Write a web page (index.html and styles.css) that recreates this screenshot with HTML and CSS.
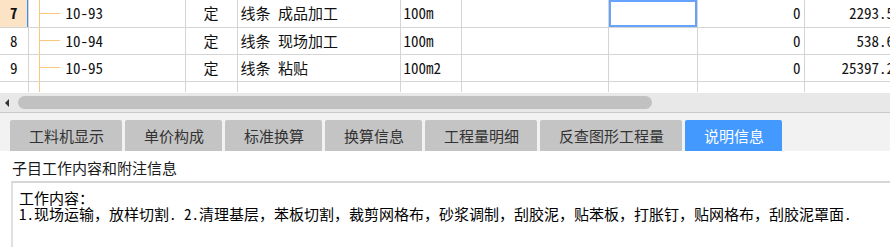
FILE: index.html
```html
<!DOCTYPE html>
<html lang="zh-CN">
<head>
<meta charset="utf-8">
<title>定额说明信息</title>
<link rel="stylesheet" href="styles.css">
</head>
<body>
<div class="grid">
  <table class="sheet">
    <colgroup>
      <col class="w-num"><col class="w-code"><col class="w-type"><col class="w-name"><col class="w-unit"><col class="w-blank"><col class="w-cur"><col class="w-qty"><col class="w-sum">
    </colgroup>
    <tr class="selected">
      <td class="num">7</td><td class="tree">10-93</td><td class="c">定</td><td>线条 成品加工</td><td>100m</td><td></td><td class="cur"></td><td class="r">0</td><td class="r">2293.54</td>
    </tr>
    <tr>
      <td class="num">8</td><td class="tree">10-94</td><td class="c">定</td><td>线条 现场加工</td><td>100m</td><td></td><td></td><td class="r">0</td><td class="r">538.61</td>
    </tr>
    <tr>
      <td class="num">9</td><td class="tree">10-95</td><td class="c">定</td><td>线条 粘贴</td><td>100m2</td><td></td><td></td><td class="r">0</td><td class="r">25397.22</td>
    </tr>
    <tr class="filler">
      <td class="num"></td><td class="tree stem"></td><td></td><td></td><td></td><td></td><td></td><td></td><td></td>
    </tr>
  </table>
</div>
<div class="hscroll">
  <span class="arrow"></span>
  <div class="thumb"></div>
</div>
<div class="tabs">
  <div class="tab">工料机显示</div>
  <div class="tab">单价构成</div>
  <div class="tab">标准换算</div>
  <div class="tab">换算信息</div>
  <div class="tab">工程量明细</div>
  <div class="tab">反查图形工程量</div>
  <div class="tab active">说明信息</div>
</div>
<div class="panel">
  <div class="caption">子目工作内容和附注信息</div>
  <div class="box">工作内容：<br>1.现场运输，放样切割. 2.清理基层，苯板切割，裁剪网格布，砂浆调制，刮胶泥，贴苯板，打胀钉，贴网格布，刮胶泥罩面.</div>
</div>
</body>
</html>
```
FILE: styles.css
```css
html, body {
  margin: 0;
  padding: 0;
  width: 890px;
  height: 247px;
  overflow: hidden;
  background: #fff;
}
body {
  font-family: "Noto Sans Mono CJK SC", "Noto Sans CJK SC", monospace;
  font-size: 15px;
  color: #111;
}

/* grid */
.grid {
  height: 92px;
  overflow: hidden;
}
.sheet {
  border-collapse: collapse;
  table-layout: fixed;
  width: 905px;
}
.w-num { width: 28px; }
.w-code { width: 157px; }
.w-type { width: 52px; }
.w-name { width: 163px; }
.w-unit { width: 61px; }
.w-blank { width: 147px; }
.w-cur { width: 89px; }
.w-qty { width: 107px; }
.w-sum { width: 101px; }

.sheet td {
  height: 27px;
  padding: 0 3px;
  border-right: 1px solid #d4d4d4;
  border-bottom: 1px solid #d4d4d4;
  white-space: nowrap;
  overflow: hidden;
  vertical-align: middle;
  line-height: 16px;
  box-sizing: border-box;
}
.sheet td.num {
  text-align: center;
  padding: 0;
}
.selected td.num {
  background: #fde3c6;
  font-weight: bold;
  box-shadow: inset -1px 0 0 #3d8ef5;
}
.sheet td.tree {
  padding-left: 37px;
  background:
    linear-gradient(#fbc67e, #fbc67e) 10px 0 / 1px 100% no-repeat,
    linear-gradient(#fbc67e, #fbc67e) 10px 50% / 21px 1px no-repeat;
}
.sheet td.stem {
  background: linear-gradient(#fbc67e, #fbc67e) 10px 0 / 1px 100% no-repeat;
}
.sheet td.c { text-align: center; }
.sheet td.r { text-align: right; }
.sheet td.cur {
  box-shadow: inset 0 0 0 2px #66a3ff;
}
.filler td {
  border-bottom: none;
}

/* horizontal scrollbar */
.hscroll {
  height: 19px;
  margin-top: 1px;
  background: #e8e8e8;
  border-bottom: 1px solid #c9c9c9;
  display: flex;
  align-items: center;
}
.arrow {
  width: 0;
  height: 0;
  margin-left: 5px;
  border-top: 4px solid transparent;
  border-bottom: 4px solid transparent;
  border-right: 4px solid #333;
}
.thumb {
  margin-left: 9px;
  width: 634px;
  height: 13px;
  border-radius: 7px;
  background: #c1c1c1;
}

/* tabs */
.tabs {
  display: flex;
  gap: 3px;
  padding: 7px 0 0 10px;
  background: #f2f2f2;
  height: 31px;
}
.tab {
  height: 31px;
  line-height: 31px;
  padding: 0 18px 0 19px;
  background: #c4c4c4;
  color: #333;
  border-radius: 2px 2px 0 0;
  font-family: "Noto Sans CJK SC", sans-serif;
}
.tab.active {
  background: #4499ff;
  color: #fff;
}

/* info panel */
.panel {
  padding: 4px 0 0 11px;
}
.caption {
  padding-left: 1px;
  line-height: 26px;
  height: 26px;
  color: #1a1a1a;
  font-family: "Noto Sans CJK SC", sans-serif;
}
.box {
  border-top: 2px solid #d6d6d6;
  border-left: 2px solid #e0e0e0;
  padding: 7px 0 0 6px;
  height: 57px;
  line-height: 16px;
  color: #000;
  white-space: nowrap;
}
```
